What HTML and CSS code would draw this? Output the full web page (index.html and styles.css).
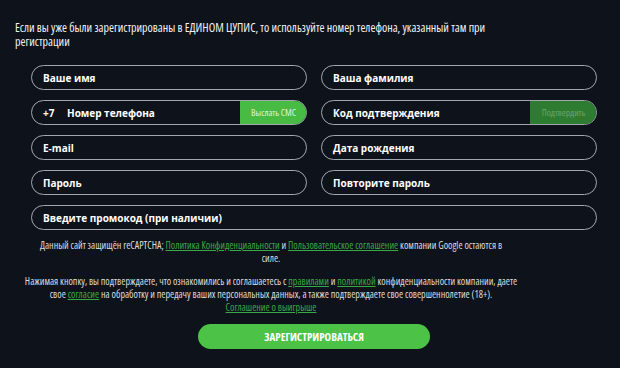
FILE: index.html
```html
<!DOCTYPE html>
<html lang="ru">
<head>
    <meta charset="UTF-8">
    <title>Регистрация</title>
    <link rel="stylesheet" href="styles.css">
</head>
<body>

<div class="page">
    <p class="hint">Если вы уже были зарегистрированы в ЕДИНОМ ЦУПИС, то используйте номер телефона, указанный там при регистрации</p>

    <form class="reg-form">
        <div class="grid">
            <div class="field"><span class="label">Ваше имя</span></div>
            <div class="field"><span class="label">Ваша фамилия</span></div>

            <div class="field">
                <span class="label prefix">+7</span>
                <span class="label">Номер телефона</span>
                <button type="button" class="side-btn sms">Выслать СМС</button>
            </div>
            <div class="field">
                <span class="label">Код подтверждения</span>
                <button type="button" class="side-btn confirm">Подтвердить</button>
            </div>

            <div class="field"><span class="label">E-mail</span></div>
            <div class="field"><span class="label">Дата рождения</span></div>

            <div class="field"><span class="label">Пароль</span></div>
            <div class="field"><span class="label">Повторите пароль</span></div>

            <div class="field wide"><span class="label">Введите промокод (при наличии)</span></div>
        </div>

        <div class="notes">
            <p>Данный сайт защищён reCAPTCHA; <a href="#">Политика Конфиденциальности</a> и <a href="#">Пользовательское соглашение</a> компании Google остаются в<br>силе.</p>
            <p>Нажимая кнопку, вы подтверждаете, что ознакомились и соглашаетесь с <a href="#">правилами</a> и <a href="#">политикой</a> конфиденциальности компании, даете<br>свое <a href="#">согласие</a> на обработку и передачу ваших персональных данных, а также подтверждаете свое совершеннолетие (18+).<br><a href="#">Соглашение о выигрыше</a></p>
        </div>

        <button type="submit" class="submit">ЗАРЕГИСТРИРОВАТЬСЯ</button>
    </form>
</div>

</body>
</html>
```
FILE: styles.css
```css
body {
    margin: 0;
    background-color: #0e131b;
    color: #fff;
    font-family: "Open Sans", Arial, sans-serif;
}
.page {
    padding: 21px 0 0 15px;
}
.hint {
    margin: 0;
    font-size: 12px;
    line-height: 14px;
    font-stretch: 75%;
    color: #f2f2f2;
    width: 500px;
}
.reg-form {
    margin: 16px 0 0 16px;
    width: 566px;
}
.grid {
    display: grid;
    grid-template-columns: 1fr 1fr;
    column-gap: 14px;
    row-gap: 10px;
}
.field {
    display: flex;
    align-items: center;
    height: 25px;
    box-sizing: border-box;
    border: 1px solid #a3a7ae;
    border-radius: 13px;
    padding-left: 11px;
    overflow: hidden;
}
.field.wide {
    grid-column: 1 / 3;
}
.label {
    font-size: 10px;
    font-weight: 700;
    color: #fff;
}
.prefix {
    width: 24px;
}
.side-btn {
    margin: -1px -1px -1px auto;
    height: 25px;
    width: 67px;
    border: none;
    border-radius: 0 13px 13px 0;
    font-family: "Open Sans", Arial, sans-serif;
    font-size: 9.5px;
    font-stretch: 80%;
    padding: 0;
}
.sms {
    background-color: #47bb43;
    color: #dff5dc;
}
.confirm {
    background-color: #2e7c32;
    color: #6da36a;
}
.notes {
    width: 504px;
    margin: 9px 0 0 -12px;
    text-align: center;
    font-size: 10px;
    line-height: 13px;
    font-stretch: 75%;
    color: #dcdcdc;
}
.notes p {
    margin: 0 0 10px;
}
.notes a {
    color: #3aa844;
}
.submit {
    display: block;
    margin: 1px auto 0;
    width: 232px;
    height: 25px;
    border: none;
    border-radius: 13px;
    background-color: #4cc247;
    color: #fff;
    font-family: "Open Sans", Arial, sans-serif;
    font-size: 11px;
    font-weight: 700;
    font-stretch: 75%;
}
```
